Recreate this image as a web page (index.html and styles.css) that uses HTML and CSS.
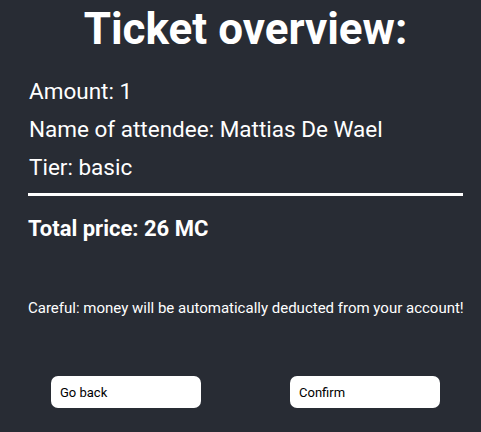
FILE: index.html
```html
<!DOCTYPE html>
<html>
<head>
<meta charset="utf-8">
<link rel="stylesheet" href="styles.css">
</head>
<body>
<div class="page">
  <h1 class="title">Ticket overview:</h1>
  <p class="line">Amount: 1</p>
  <p class="line">Name of attendee: Mattias De Wael</p>
  <p class="line">Tier: basic</p>
  <hr class="divider">
  <p class="total">Total price: 26 MC</p>
  <p class="warning">Careful: money will be automatically deducted from your account!</p>
  <div class="actions">
    <button class="btn">Go back</button>
    <button class="btn">Confirm</button>
  </div>
</div>
</body>
</html>
```
FILE: styles.css
```css
html, body {
  margin: 0;
  padding: 0;
  background: #282c34;
  height: 100%;
}
body {
  font-family: Roboto, "Liberation Sans", sans-serif;
  color: #ffffff;
}
.page {
  padding: 0 18px 0 28px;
}
.title {
  margin: 0;
  padding-top: 3px;
  text-align: center;
  font-size: 44px;
  font-weight: 700;
  line-height: 52px;
}
.line {
  margin: 0;
  font-size: 22.5px;
  line-height: 38px;
  padding-left: 1px;
}
.line:first-of-type {
  margin-top: 17px;
}
.divider {
  border: none;
  height: 3px;
  background: #ffffff;
  margin: 7px 0 0 0;
}
.total {
  margin: 19px 0 0 0;
  font-size: 22px;
  font-weight: 700;
  line-height: 28px;
}
.warning {
  margin: 56px 0 0 0;
  font-size: 15px;
  line-height: 18px;
  white-space: nowrap;
}
.actions {
  display: flex;
  justify-content: space-between;
  margin: 59px 0 0 23px;
  padding-right: 23px;
}
.btn {
  width: 150px;
  height: 32px;
  background: #ffffff;
  border: none;
  border-radius: 7px;
  font-family: Roboto, "Liberation Sans", sans-serif;
  font-size: 13px;
  color: #000000;
  text-align: left;
  padding: 0 9px;
}
```
